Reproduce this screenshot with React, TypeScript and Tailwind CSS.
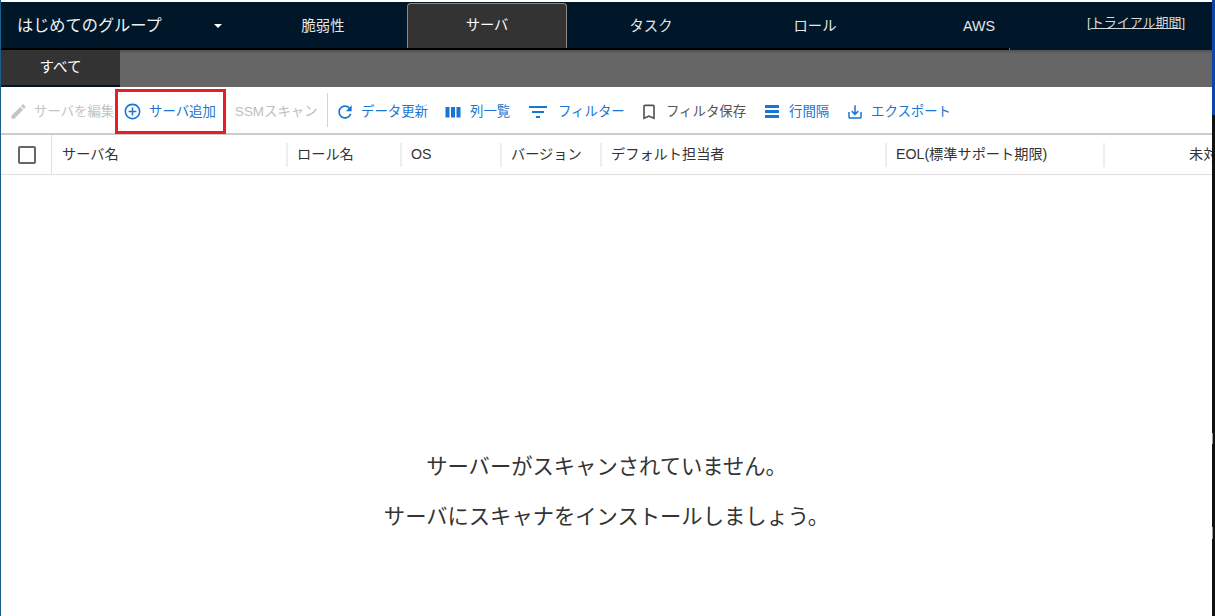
const FONT = "font-['Liberation_Sans','Noto_Sans_CJK_JP',sans-serif]";

const NAV_TABS = ["脆弱性", "サーバ", "タスク", "ロール", "AWS"];

const COLUMNS = [
  { label: "サーバ名", width: "w-[235px]" },
  { label: "ロール名", width: "w-[114px]" },
  { label: "OS", width: "w-[100px]" },
  { label: "バージョン", width: "w-[100px]" },
  { label: "デフォルト担当者", width: "w-[285px]" },
  { label: "EOL(標準サポート期限)", width: "w-[218px]" },
];

const ICONS = {
  edit: "M3 17.25V21h3.75L17.81 9.94l-3.75-3.75L3 17.25zM20.71 7.04c.39-.39.39-1.02 0-1.41l-2.34-2.34c-.39-.39-1.02-.39-1.41 0l-1.83 1.83 3.75 3.75 1.83-1.83z",
  add: "M13 7h-2v4H7v2h4v4h2v-4h4v-2h-4V7zm-1-5C6.48 2 2 6.48 2 12s4.48 10 10 10 10-4.48 10-10S17.52 2 12 2zm0 18c-4.41 0-8-3.59-8-8s3.59-8 8-8 8 3.59 8 8-3.59 8-8 8z",
  refresh: "M17.65 6.35C16.2 4.9 14.21 4 12 4c-4.42 0-7.99 3.58-7.99 8s3.57 8 7.99 8c3.73 0 6.84-2.55 7.73-6h-2.08c-.82 2.33-3.04 4-5.65 4-3.31 0-6-2.69-6-6s2.69-6 6-6c1.66 0 3.14.69 4.22 1.78L13 11h7V4l-2.35 2.35z",
  bookmark: "M17 3H7c-1.1 0-1.99.9-1.99 2L5 21l7-3 7 3V5c0-1.1-.9-2-2-2zm0 15l-5-2.18L7 18V5h10v13z",
  download: "M19 12v7H5v-7H3v7c0 1.1.9 2 2 2h14c1.1 0 2-.9 2-2v-7h-2zm-6 .67l2.59-2.58L17 11.5l-5 5-5-5 1.41-1.41L11 12.67V3h2z",
};

function Icon({ d, size, className }: { d: string; size: number; className: string }) {
  return (
    <svg width={size} height={size} viewBox="0 0 24 24" fill="currentColor" className={`shrink-0 ${className}`}>
      <path d={d} />
    </svg>
  );
}

function ColumnsIcon() {
  return (
    <svg width="16" height="12" viewBox="0 0 16 12" fill="#1976d2" className="mr-[9px] shrink-0">
      <rect x="0.5" y="1" width="4" height="10.5" />
      <rect x="6" y="1" width="4" height="10.5" />
      <rect x="11.5" y="1" width="4" height="10.5" />
    </svg>
  );
}

function FilterIcon() {
  return (
    <svg width="18" height="12" viewBox="0 0 18 12" fill="#1976d2" className="mr-[11px] shrink-0">
      <rect x="0" y="0" width="18" height="2" />
      <rect x="3" y="5" width="12" height="2" />
      <rect x="7" y="10" width="4" height="2" />
    </svg>
  );
}

function DensityIcon() {
  return (
    <svg width="14" height="13" viewBox="0 0 14 13" fill="#1976d2" className="mr-[10px] shrink-0">
      <rect x="0" y="0" width="14" height="3" />
      <rect x="0" y="5" width="14" height="3" />
      <rect x="0" y="10" width="14" height="3" />
    </svg>
  );
}

function NavBar() {
  return (
    <div className="flex h-[48px] bg-[#001729] text-[#f2f2f2]">
      <div className="flex h-[48px] w-[1008px] shrink-0 border-b-2 border-black">
        <div className="flex w-[242px] shrink-0 items-center pl-[16px] pr-[21px]">
          <span className="text-[16.2px] leading-none">はじめてのグループ</span>
          <span className="ml-auto mt-[2px] h-0 w-0 border-x-[4px] border-t-[4px] border-x-transparent border-t-white" />
        </div>
        <div className="flex gap-[4px] pt-[1px]">
          {NAV_TABS.map((tab) =>
            tab === "サーバ" ? (
              <div
                key={tab}
                className="flex h-[45px] w-[160px] shrink-0 items-center justify-center rounded-t-[4px] border border-b-0 border-[#8a8a8a] bg-[#333333] text-[14.3px] text-white"
              >
                {tab}
              </div>
            ) : (
              <div
                key={tab}
                className="flex h-[47px] w-[160px] shrink-0 items-center justify-center text-[14.3px] text-[#e6e6e6]"
              >
                {tab}
              </div>
            ),
          )}
        </div>
      </div>
      <span className="h-[2px] w-px self-end bg-[#777777]" />
      <a className="ml-[77px] mt-[11px] text-[13px] leading-[20px] text-[#d9d9d9]">
        [<span className="underline">トライアル期間</span>]
      </a>
    </div>
  );
}

function ToolbarButton({
  icon,
  label,
  className,
}: {
  icon: React.ReactNode;
  label: string;
  className: string;
}) {
  return (
    <div className={`flex shrink-0 items-center whitespace-nowrap text-[13.4px] ${className}`}>
      {icon}
      <span>{label}</span>
    </div>
  );
}

function Toolbar() {
  return (
    <div className="relative flex h-[48px] items-center border-b-2 border-[#cccccc] pl-[8px] pt-[4px]">
      <ToolbarButton
        icon={<Icon d={ICONS.edit} size={19} className="mr-[6px]" />}
        label="サーバを編集"
        className="w-[109px] overflow-hidden text-[#c4c4c4]"
      />
      <ToolbarButton
        icon={<Icon d={ICONS.add} size={19} className="mr-[7px]" />}
        label="サーバ追加"
        className="w-[115px] pl-[5px] text-[#1976d2]"
      />
      <span className="w-[94px] shrink-0 pl-[2px] text-[13.4px] text-[#bdbdbd]">SSMスキャン</span>
      <span className="-mt-[4px] h-[34px] w-px shrink-0 bg-[#d4d4d4]" />
      <ToolbarButton
        icon={<Icon d={ICONS.refresh} size={20} className="mr-[6px]" />}
        label="データ更新"
        className="w-[117px] pl-[7px] text-[#1976d2]"
      />
      <ToolbarButton icon={<ColumnsIcon />} label="列一覧" className="w-[84px] text-[#1976d2]" />
      <ToolbarButton icon={<FilterIcon />} label="フィルター" className="w-[114px] text-[#1976d2]" />
      <ToolbarButton
        icon={<Icon d={ICONS.bookmark} size={20} className="-ml-[4px] mr-[7px]" />}
        label="フィルタ保存"
        className="w-[122px] text-[#555555]"
      />
      <ToolbarButton icon={<DensityIcon />} label="行間隔" className="w-[82px] text-[#1976d2]" />
      <ToolbarButton
        icon={<Icon d={ICONS.download} size={18} className="-ml-[1px] mr-[7px]" />}
        label="エクスポート"
        className="text-[#1976d2]"
      />
      {/* highlight drawn over the screenshot */}
      <div className="absolute left-[114px] top-[2px] h-[45px] w-[111px] border-[3px] border-[#ed1c24]" />
    </div>
  );
}

function TableHeader() {
  return (
    <div className="flex h-[40px] overflow-hidden border-b border-[#e0e0e0] text-[14.2px] text-[#333333]">
      <div className="flex w-[51px] shrink-0 items-center justify-center border-r border-[#e0e0e0] pl-[2px]">
        <span className="h-[18px] w-[18px] rounded-[2px] border-2 border-[#666666]" />
      </div>
      {COLUMNS.map((col) => (
        <div key={col.label} className={`flex shrink-0 items-center ${col.width}`}>
          <span className="flex-1 whitespace-nowrap pl-[10px]">{col.label}</span>
          <span className="-mr-[1px] h-[24px] w-[2px] bg-[#eeeeee]" />
        </div>
      ))}
      <div className="shrink-0 self-center whitespace-nowrap pl-[85px]">未対応</div>
    </div>
  );
}

export default function App() {
  return (
    <div className={`flex h-[616px] w-[1215px] overflow-hidden bg-white ${FONT}`}>
      <div className="w-px shrink-0 bg-[#1a5e8a]" />
      <div className="flex min-w-0 flex-1 flex-col pt-[2px]">
        <NavBar />
        <div className="flex h-[37px] bg-linear-to-b from-[#505050] to-[#666666] to-10%">
          <div className="flex w-[119px] items-center justify-center border-b-2 border-[#001729] bg-[#333333] text-[14.5px] text-white">
            すべて
          </div>
        </div>
        <Toolbar />
        <TableHeader />
        <div className="flex flex-1 flex-col items-center gap-[24px] pt-[279px] text-[21.3px] leading-[26px] text-[#333333]">
          <p>サーバーがスキャンされていません。</p>
          <p>サーバにスキャナをインストールしましょう。</p>
        </div>
      </div>
      <div className="flex w-[3px] shrink-0 flex-col bg-[#111111]">
        <div className="h-[115px] bg-[#0a47a8]" />
        <div className="mt-[318px] h-[11px] w-px bg-[#999999]" />
        <div className="mt-[83px] h-[12px] w-px bg-[#999999]" />
      </div>
    </div>
  );
}
